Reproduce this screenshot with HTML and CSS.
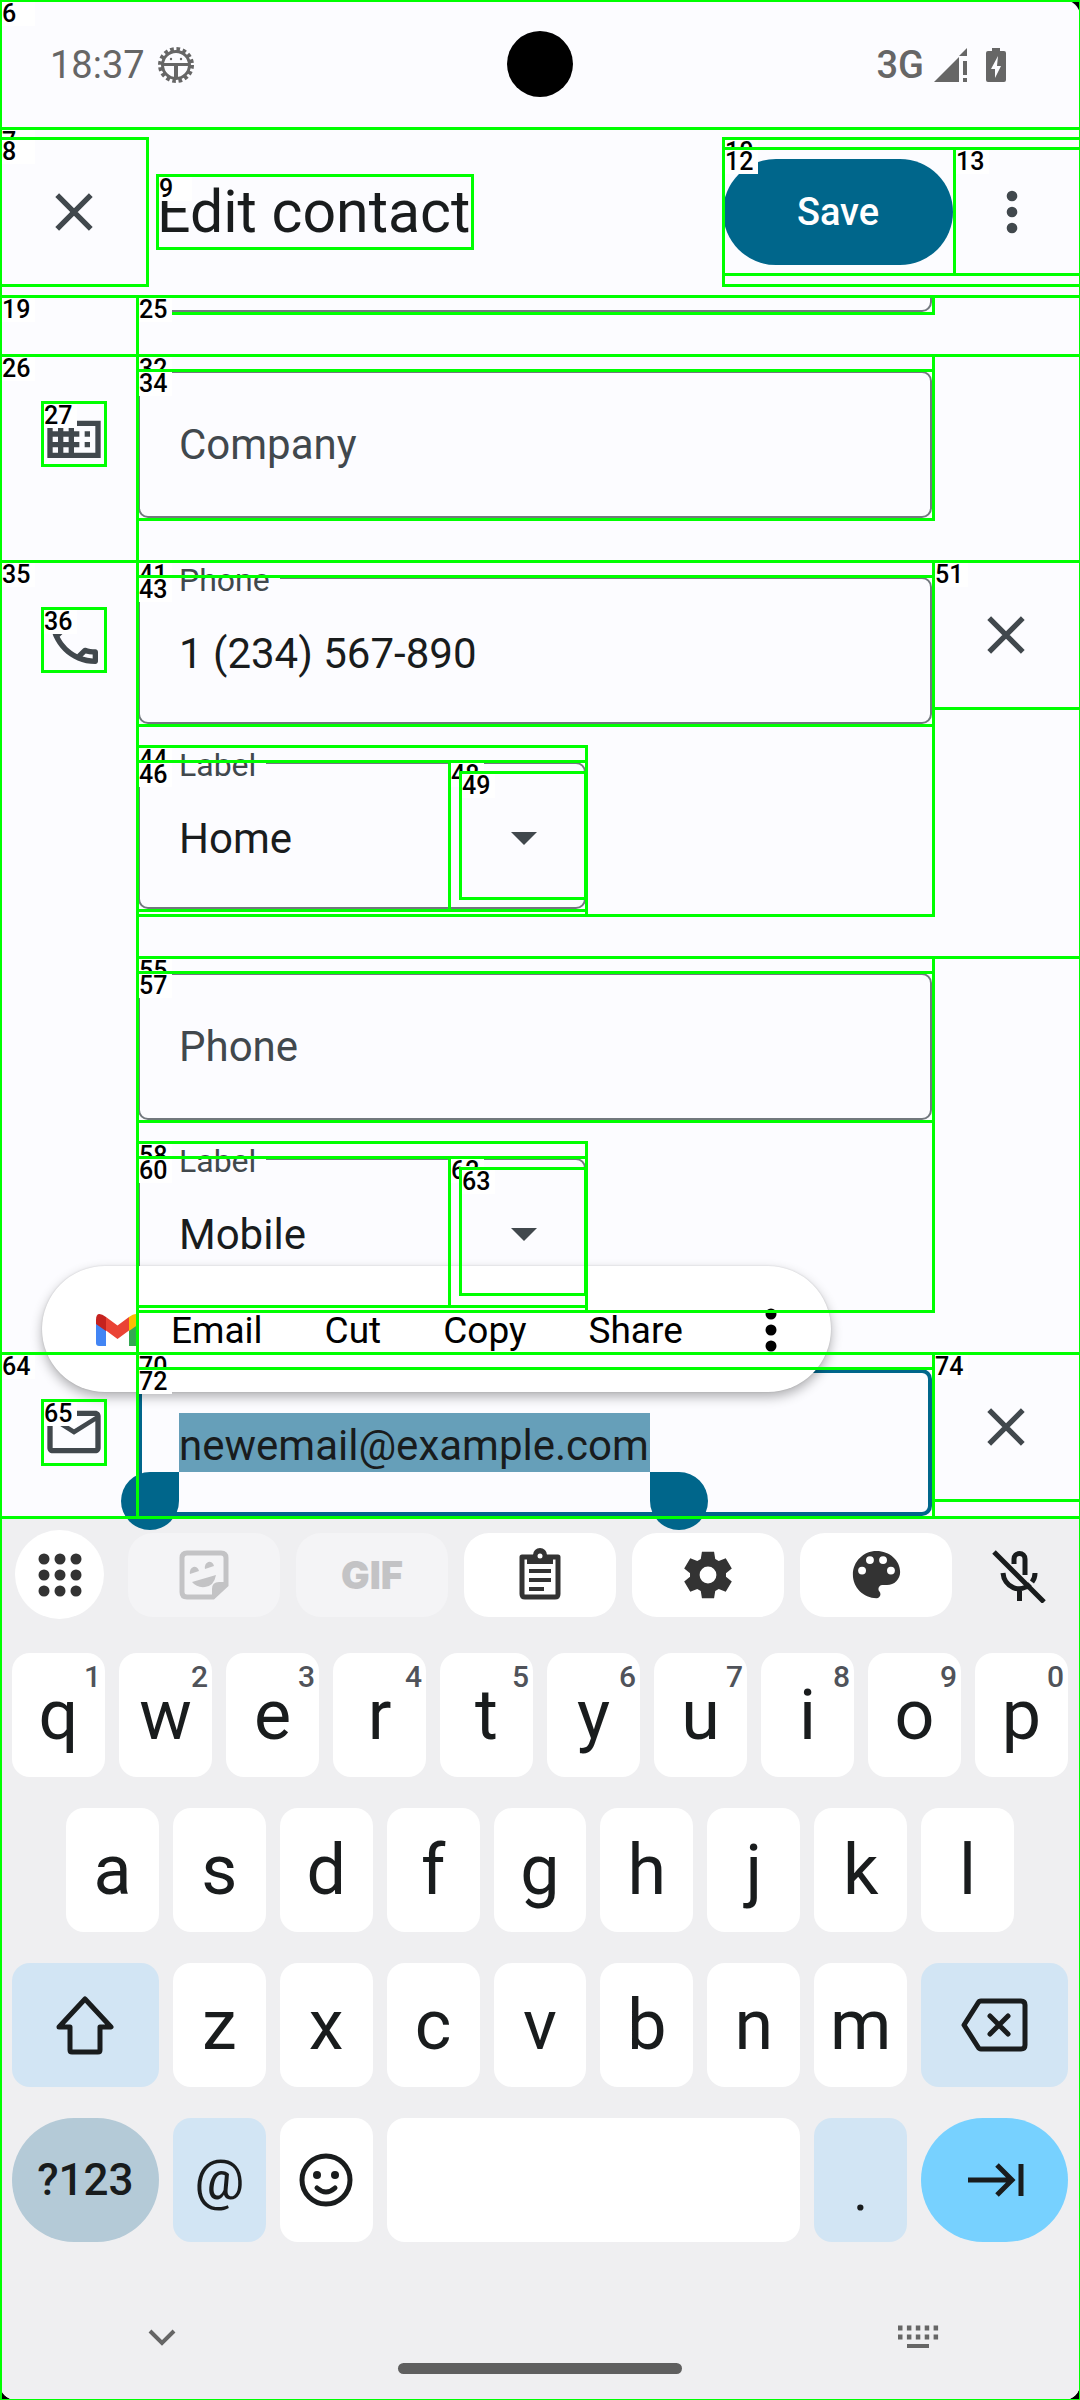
FILE: index.html
```html
<!DOCTYPE html>
<html lang="en">
<head>
<meta charset="utf-8">
<meta name="viewport" content="width=device-width, initial-scale=1">
<title>Edit contact</title>
<link rel="stylesheet" href="styles.css">
</head>
<body>
<div class="stage">
<div class="screen">
  <header class="status">
    <span class="clock">18:37</span>
    <svg class="status-bug" viewBox="0 0 38 38" aria-hidden="true">
      <circle cx="19" cy="19" r="16" fill="none" stroke="#666" stroke-width="4" stroke-dasharray="3.6 2.68"/>
      <circle cx="19" cy="19" r="13.5" fill="none" stroke="#666" stroke-width="3"/>
      <path d="M6 17h26v3H21v13h-4V20H6z" fill="#666"/>
      <circle cx="14" cy="13" r="1.2" fill="#666"/><circle cx="24" cy="13" r="1.2" fill="#666"/>
    </svg>
    <span class="camera"></span>
    <span class="network">3G</span>
    <svg class="status-signal" viewBox="0 0 34 34" aria-hidden="true">
      <path d="M0 34L25 9v25zM25 8l8-8v8zM29 13h4v14h-4zM29 30h4v4h-4z" fill="#666"/>
    </svg>
    <svg class="status-battery" viewBox="0 0 20 34" aria-hidden="true">
      <path d="M6 0h8v3h4q2 0 2 2v27q0 2-2 2H2q-2 0-2-2V5q0-2 2-2h4z" fill="#666"/>
      <path d="M12 8L5 21h4v9l6-12h-4z" fill="#fcfcff"/>
    </svg>
  </header>

  <div class="appbar">
    <button class="icon-btn bar-close" aria-label="Close"><svg class="ic" viewBox="0 0 24 24"><path d="M5.7 5.7l12.6 12.6M18.3 5.7L5.7 18.3" class="cross"/></svg></button>
    <h1 class="title">Edit contact</h1>
    <button class="save">Save</button>
    <button class="icon-btn bar-more" aria-label="More options"><svg class="ic" viewBox="0 0 24 24"><circle cx="12" cy="6" r="2"/><circle cx="12" cy="12" r="2"/><circle cx="12" cy="18" r="2"/></svg></button>
  </div>

  <main class="form">
    <div class="row row-tail"><div class="stack"><div class="field-tail"></div></div></div>

    <div class="row">
      <svg class="ic row-icon" viewBox="0 0 24 24" aria-hidden="true"><path d="M12 7V3H2v18h20V7H12zM6 19H4v-2h2v2zm0-4H4v-2h2v2zm0-4H4V9h2v2zm0-4H4V5h2v2zm4 12H8v-2h2v2zm0-4H8v-2h2v2zm0-4H8V9h2v2zm0-4H8V5h2v2zm10 12h-8v-2h2v-2h-2v-2h2v-2h-2V9h8v10zm-2-8h-2v2h2v-2zm0 4h-2v2h2v-2z"/></svg>
      <div class="stack stack-last"><div class="field"><input type="text" placeholder="Company" aria-label="Company"></div></div>
    </div>

    <div class="row">
      <svg class="ic row-icon" viewBox="0 0 24 24" aria-hidden="true"><path d="M6.54 5c.06.89.21 1.76.45 2.59l-1.2 1.2c-.41-1.2-.67-2.47-.76-3.79h1.51m9.86 12.02c.85.24 1.72.39 2.6.45v1.49c-1.32-.09-2.59-.35-3.8-.75l1.2-1.19M7.5 3H4c-.55 0-1 .45-1 1 0 9.39 7.61 17 17 17 .55 0 1-.45 1-1v-3.49c0-.55-.45-1-1-1-1.24 0-2.45-.2-3.57-.57-.1-.04-.21-.05-.31-.05-.26 0-.51.1-.71.29l-2.2 2.2c-2.83-1.45-5.15-3.76-6.59-6.59l2.2-2.2c.28-.28.36-.67.25-1.02C8.7 6.45 8.5 5.25 8.5 4c0-.55-.45-1-1-1z"/></svg>
      <div class="stack">
        <div class="field filled"><label for="phone1">Phone</label><input id="phone1" type="tel" value="1 (234) 567-890"></div>
        <div class="field filled short"><label for="label1">Label</label><select id="label1"><option>Home</option></select><svg class="arrow" viewBox="0 0 26 13" aria-hidden="true"><path d="M0 0h26L13 13z"/></svg></div>
      </div>
      <button class="icon-btn clear" aria-label="Delete phone"><svg class="ic" viewBox="0 0 24 24"><path d="M5.7 5.7l12.6 12.6M18.3 5.7L5.7 18.3" class="cross"/></svg></button>
    </div>

    <div class="row">
      <div class="stack">
        <div class="field"><input type="tel" placeholder="Phone" aria-label="Phone"></div>
        <div class="field filled short"><label for="label2">Label</label><select id="label2"><option>Mobile</option></select><svg class="arrow" viewBox="0 0 26 13" aria-hidden="true"><path d="M0 0h26L13 13z"/></svg></div>
      </div>
    </div>

    <div class="row row-email">
      <svg class="ic row-icon" viewBox="0 0 24 24" aria-hidden="true"><path d="M20 4H4c-1.1 0-1.99.9-1.99 2L2 18c0 1.1.9 2 2 2h16c1.1 0 2-.9 2-2V6c0-1.1-.9-2-2-2zm0 14H4V8l8 5 8-5v10zm-8-7L4 6h16l-8 5z"/></svg>
      <div class="stack stack-end">
        <div class="field active">
          <div class="selection">
            <input type="email" value="newemail@example.com" aria-label="Email">
            <span class="handle handle-start"></span><span class="handle handle-end"></span>
          </div>
        </div>
      </div>
      <button class="icon-btn clear" aria-label="Delete email"><svg class="ic" viewBox="0 0 24 24"><path d="M5.7 5.7l12.6 12.6M18.3 5.7L5.7 18.3" class="cross"/></svg></button>

      <div class="popup" role="toolbar" aria-label="Text actions">
        <button class="popup-main">
          <svg class="gmail" viewBox="0 0 43 32" aria-hidden="true">
            <path d="M0 8l10 7v17H3q-3 0-3-3z" fill="#4285f4"/>
            <path d="M43 8l-10 7v17h7q3 0 3-3z" fill="#34a853"/>
            <path d="M33 3q10-7 10 3v4l-10 7z" fill="#fbbc04"/>
            <path d="M10 3Q0-4 0 6v4l10 7z" fill="#c5221f"/>
            <path d="M10 3l11.500 8.500L33 3v13.500L21.500 25 10 16.500z" fill="#ea4335"/>
          </svg>Email</button>
        <button>Cut</button>
        <button>Copy</button>
        <button>Share</button>
        <button class="popup-more" aria-label="More"><svg viewBox="0 0 12 44"><circle cx="6" cy="6" r="5.500"/><circle cx="6" cy="22" r="5.500"/><circle cx="6" cy="38" r="5.500"/></svg></button>
      </div>
    </div>
  </main>

  <section class="keyboard" aria-label="Keyboard">
    <div class="strip">
      <button class="round" aria-label="Features"><svg viewBox="0 0 44 44"><g fill="#333"><circle cx="6" cy="6" r="5.500"/><circle cx="22" cy="6" r="5.500"/><circle cx="38" cy="6" r="5.500"/><circle cx="6" cy="22" r="5.500"/><circle cx="22" cy="22" r="5.500"/><circle cx="38" cy="22" r="5.500"/><circle cx="6" cy="38" r="5.500"/><circle cx="22" cy="38" r="5.500"/><circle cx="38" cy="38" r="5.500"/></g></svg></button>
      <button class="chip off" aria-label="Stickers"><svg viewBox="0 0 56 56"><path d="M11 6h34q5 0 5 5v27L37 50H11q-5 0-5-5V11q0-5 5-5z" fill="none" stroke="#c3c3c5" stroke-width="5"/><path d="M36 51V42q0-7 7-7h8zM14 27a4 5 0 0 1 9-3zM29 22a4 5 0 0 1 9-3zM16 35l24-7q-2 11-11 12-8 1-13-5z" fill="#c3c3c5"/></svg></button>
      <button class="chip off gif">GIF</button>
      <button class="chip" aria-label="Clipboard"><svg viewBox="0 0 56 56"><path d="M10 10h36v37q0 3-3 3H13q-3 0-3-3z" fill="none" stroke="#333" stroke-width="5" stroke-linejoin="round"/><path d="M15 8h6a7 7 0 0 1 14 0h6v9H15zM17 22h22v4H17zM17 31h22v4H17zM17 40h15v4H17z" fill="#333"/><circle cx="28" cy="9" r="2.500" fill="#fff"/></svg></button>
      <button class="chip" aria-label="Settings"><svg viewBox="0 0 24 24"><path fill="#333" fill-rule="evenodd" d="M9.400 2h5.200l.5 3.100 1.500.9 3-1.200 2.600 4.400-2.500 2v1.600l2.500 2-2.600 4.400-3-1.200-1.500.9-.5 3.100H9.400l-.5-3.100-1.500-.9-3 1.200-2.600-4.400 2.500-2v-1.600l-2.500-2 2.600-4.400 3 1.200 1.500-.9zM12 8.400a3.600 3.600 0 1 0 0 7.200 3.600 3.600 0 0 0 0-7.200z"/></svg></button>
      <button class="chip" aria-label="Themes"><svg class="big" viewBox="0 0 24 24"><path fill="#333" d="M12 3c-4.970 0-9 4.030-9 9s4.030 9 9 9c.83 0 1.500-.67 1.500-1.500 0-.39-.15-.74-.39-1.010-.23-.26-.38-.61-.38-.99 0-.83.67-1.500 1.500-1.500H16c2.760 0 5-2.240 5-5 0-4.420-4.030-8-9-8z"/><g fill="#fff"><circle cx="6.500" cy="10.500" r="1.500"/><circle cx="9.500" cy="6.500" r="1.500"/><circle cx="14.500" cy="6.500" r="1.500"/><circle cx="17.500" cy="10.500" r="1.500"/></g></svg></button>
      <button class="mic" aria-label="Voice input off"><svg viewBox="0 0 56 56"><g fill="none" stroke="#191c1d" stroke-width="5"><path d="M23 17v-5a5.500 5.500 0 0 1 11 0v16M12 26a16 17 0 0 0 27 11M44 26q0 5-3 9M28.500 42v12M3 5l50 50"/></g></svg></button>
    </div>

    <div class="keys">
      <div class="krow">
        <button class="key">q<sup>1</sup></button><button class="key">w<sup>2</sup></button><button class="key">e<sup>3</sup></button><button class="key">r<sup>4</sup></button><button class="key">t<sup>5</sup></button><button class="key">y<sup>6</sup></button><button class="key">u<sup>7</sup></button><button class="key">i<sup>8</sup></button><button class="key">o<sup>9</sup></button><button class="key">p<sup>0</sup></button>
      </div>
      <div class="krow inset">
        <button class="key">a</button><button class="key">s</button><button class="key">d</button><button class="key">f</button><button class="key">g</button><button class="key">h</button><button class="key">j</button><button class="key">k</button><button class="key">l</button>
      </div>
      <div class="krow">
        <button class="key wide tint" aria-label="Shift"><svg viewBox="0 0 68 68"><path d="M34 8L60 36H49v23q0 2-2 2H21q-2 0-2-2V36H8z" class="line"/></svg></button>
        <button class="key">z</button><button class="key">x</button><button class="key">c</button><button class="key">v</button><button class="key">b</button><button class="key">n</button><button class="key">m</button>
        <button class="key wide tint" aria-label="Backspace"><svg viewBox="0 0 68 68"><path d="M20 10h40q4 0 4 4v40q0 4-4 4H20q-2 0-3-2L3 34 17 12q1-2 3-2zM29 25l18 18M47 25L29 43" class="line"/></svg></button>
      </div>
      <div class="krow">
        <button class="key wide pill symbols">?123</button>
        <button class="key tint at">@</button>
        <button class="key" aria-label="Emoji"><svg viewBox="0 0 68 68"><circle cx="34" cy="34" r="24" class="line"/><circle cx="25" cy="29" r="4" fill="#191c1d"/><circle cx="43" cy="29" r="4" fill="#191c1d"/><path d="M25 42q9 8 18 0" class="line"/></svg></button>
        <button class="key space" aria-label="Space"></button>
        <button class="key tint dot">.</button>
        <button class="key wide pill next" aria-label="Next"><svg viewBox="0 0 68 68"><path d="M7 34h44M36 19l15 15-15 15" class="sharp"/><path d="M60 18v32" class="sharp"/></svg></button>
      </div>
    </div>

    <nav class="sysnav">
      <button aria-label="Hide keyboard"><svg viewBox="0 0 48 48"><path d="M12 18l12 12 12-12" fill="none" stroke="#666" stroke-width="4"/></svg></button>
      <button aria-label="Switch keyboard"><svg viewBox="0 0 48 48"><g stroke="#666" fill="none"><path d="M4 15h41M4 24h41" stroke-width="5" stroke-dasharray="4.500 4.400"/><path d="M13 33h22" stroke-width="4"/></g></svg></button>
    </nav>
    <div class="homebar"></div>
  </section>
</div>
<div class="marks" id="marks"></div>
</div>
<script src="marks.js"></script>
</body>
</html>
```

FILE: marks.js
```js
// Element bounds: [label, left, top, right, bottom], drawn in order.
const bounds = [
  ["", 0, 0, 1080, 2400],
  ["6", 0, 0, 1080, 128],
  ["7", 0, 128, 1080, 296],
  ["8", 0, 138, 147, 285],
  ["9", 157, 175, 472, 248],
  ["10", 723, 138, 1080, 285],
  ["12", 723, 148, 954, 274],
  ["13", 954, 148, 1080, 274],
  ["19", 0, 296, 1080, 355],
  ["", 137, 296, 1080, 355],
  ["25", 137, 296, 933, 313],
  ["26", 0, 355, 1080, 561],
  ["27", 42, 402, 105, 465],
  ["", 137, 355, 1080, 561],
  ["32", 137, 355, 933, 519],
  ["34", 137, 370, 933, 519],
  ["35", 0, 561, 1080, 1353],
  ["36", 42, 608, 105, 671],
  ["", 137, 561, 1080, 957],
  ["", 137, 561, 933, 915],
  ["41", 137, 561, 933, 725],
  ["43", 137, 576, 933, 725],
  ["44", 137, 746, 586, 915],
  ["46", 137, 761, 586, 910],
  ["48", 449, 761, 586, 910],
  ["49", 460, 772, 585, 898],
  ["51", 933, 561, 1080, 708],
  ["", 137, 957, 1080, 1353],
  ["", 137, 957, 933, 1311],
  ["55", 137, 957, 933, 1121],
  ["57", 137, 972, 933, 1121],
  ["58", 137, 1142, 586, 1311],
  ["60", 137, 1157, 586, 1306],
  ["62", 449, 1157, 586, 1306],
  ["63", 460, 1168, 585, 1294],
  ["64", 0, 1353, 1080, 1517],
  ["65", 42, 1400, 105, 1464],
  ["70", 137, 1353, 933, 1517],
  ["72", 137, 1368, 933, 1517],
  ["74", 933, 1353, 1080, 1500]
];
const layer = document.getElementById("marks");
for (const [label, left, top, right, bottom] of bounds) {
  const box = document.createElement("div");
  box.className = "mark";
  box.style.left = left - 1 + "px";
  box.style.top = top - 1 + "px";
  box.style.width = right - left + 3 + "px";
  box.style.height = bottom - top + 3 + "px";
  if (label) {
    const tag = document.createElement("span");
    tag.className = "tag";
    tag.textContent = label;
    box.append(tag);
  }
  layer.append(box);
}
```

FILE: styles.css
```css
* { box-sizing: border-box; }
body {
  margin: 0;
  background: #000;
  font-family: Roboto, "Liberation Sans", sans-serif;
  color: #191c1d;
}
button, input, select {
  font: inherit;
  color: inherit;
  margin: 0;
  padding: 0;
  border: 0;
  background: none;
}
button { display: flex; align-items: center; justify-content: center; }
svg { display: block; flex: none; }
.stage { position: relative; overflow: hidden; }
.screen { background: #fcfcff; border-radius: 16px; overflow: hidden; }

.status {
  position: relative;
  display: flex;
  align-items: center;
  height: 128px;
  padding: 2px 74px 0 50px;
  color: #666;
  font-size: 38px;
}
.status-bug { width: 38px; height: 38px; margin-left: 12px; }
.camera {
  position: absolute;
  left: 50%;
  top: 31px;
  width: 66px;
  height: 66px;
  margin-left: -33px;
  border-radius: 50%;
  background: #000;
}
.network { margin-left: auto; font-weight: 500; }
.status-signal { width: 34px; height: 34px; margin-left: 10px; }
.status-battery { width: 20px; height: 34px; margin-left: 18px; }

.appbar { display: flex; align-items: center; height: 168px; }
.ic { width: 64px; height: 64px; fill: #41484d; }
.cross { stroke: #41484d; stroke-width: 2; }
.icon-btn { flex: none; }
.bar-close { width: 147px; height: 147px; }
.title {
  margin: 0 auto 0 10px;
  font-size: 59px;
  line-height: 72px;
  font-weight: 400;
}
.save {
  width: 230px;
  height: 106px;
  border-radius: 53px;
  background: #00668b;
  color: #fff;
  font-size: 38px;
  font-weight: 500;
}
.bar-more { width: 127px; height: 126px; padding-right: 10px; }

.row {
  position: relative;
  display: grid;
  grid-template-columns: 138px 1fr 148px;
  align-items: start;
}
.row-icon { margin: 47px 0 0 42px; grid-column: 1; grid-row: 1; }
.stack {
  grid-column: 2;
  grid-row: 1;
  display: grid;
  gap: 38px;
  padding: 16px 0 48px;
}
.stack-last { padding-bottom: 43px; }
.stack-end { padding-bottom: 1px; }
.row-tail .stack { padding: 0 0 43px; }
.field-tail {
  height: 16px;
  border: 2px solid #72787e;
  border-top: 0;
  border-radius: 0 0 10px 10px;
}
.clear { grid-column: 3; grid-row: 1; height: 147px; }
.field {
  position: relative;
  display: grid;
  align-items: center;
  height: 147px;
  padding: 0 39px;
  border: 2px solid #72787e;
  border-radius: 10px;
  font-size: 42px;
}
.filled { padding-top: 6px; }
.short { width: 448px; }
.field label {
  position: absolute;
  left: 29px;
  top: -18px;
  padding: 0 10px;
  background: #fcfcff;
  color: #41484d;
  font-size: 32px;
  line-height: 38px;
}
.field input, .field select {
  grid-area: 1 / 1;
  width: 100%;
  height: 60px;
  outline: 0;
  appearance: none;
}
.field input::placeholder { color: #41484d; opacity: 1; }
.arrow {
  grid-area: 1 / 1;
  justify-self: end;
  width: 26px;
  height: 13px;
  margin-right: 8px;
  fill: #41484d;
  pointer-events: none;
}
.active { border: 4px solid #00668b; padding: 0 37px; }
.selection { position: relative; width: 471px; }
.field .selection input {
  display: block;
  height: 59px;
  padding-top: 6px;
  background: #669fb9;
}
.handle {
  position: absolute;
  z-index: 3;
  top: 100%;
  width: 58px;
  height: 58px;
  background: #00668b;
}
.handle-start { right: 100%; border-radius: 29px 0 29px 29px; }
.handle-end { left: 100%; border-radius: 0 29px 29px 29px; }

.popup {
  position: absolute;
  z-index: 2;
  left: 42px;
  top: -87px;
  display: flex;
  align-items: center;
  gap: 62px;
  height: 126px;
  padding: 2px 54px 0;
  border-radius: 63px;
  background: #fff;
  box-shadow: 0 5px 12px rgba(0, 0, 0, .3), 0 0 2px rgba(0, 0, 0, .15);
  color: #000;
  font-size: 37px;
}
.popup-main { gap: 32px; }
.gmail { width: 43px; height: 32px; }
.popup-more { margin-left: 20px; }
.popup-more svg { width: 12px; height: 44px; }

.keyboard { background: #efeff1; padding: 13px 0 26px; }
.strip { display: flex; align-items: center; gap: 16px; padding-left: 15px; }
.round {
  width: 89px;
  height: 89px;
  margin-right: 8px;
  border-radius: 50%;
  background: #fff;
}
.round svg { width: 44px; height: 44px; }
.chip { flex: 1; height: 84px; border-radius: 25px; background: #fff; }
.chip svg, .mic svg { width: 56px; height: 56px; }
.chip .big { width: 63px; height: 63px; }
.chip.off { background: #f4f4f6; }
.gif { color: #c3c3c5; font-family: Inter, sans-serif; font-size: 38px; font-weight: 900; }
.mic { width: 112px; padding-right: 10px; }

.keys { display: grid; gap: 31px; padding: 34px 12px 0; }
.krow { display: flex; gap: 14px; }
.inset { padding: 0 54px; }
.key {
  position: relative;
  flex: 93 1 0;
  min-width: 0;
  height: 124px;
  border-radius: 18px;
  background: #fff;
  font-size: 70px;
  line-height: 82px;
}
.key sup {
  position: absolute;
  top: 6px;
  right: 4px;
  color: #50535a;
  font-size: 30px;
  font-weight: 500;
  line-height: 36px;
}
.key svg { width: 68px; height: 68px; }
.line { fill: none; stroke: #191c1d; stroke-width: 5; stroke-linejoin: round; stroke-linecap: round; }
.sharp { fill: none; stroke: #191c1d; stroke-width: 5; }
.wide { flex-grow: 147; }
.space { flex-grow: 414; }
.tint { background: #d2e5f4; }
.pill { border-radius: 62px; }
.symbols { background: #b4cad7; font-size: 44px; font-weight: 500; }
.next { background: #77d1ff; }
.at { font-size: 56px; }
.dot { padding-top: 22px; font-size: 56px; }

.sysnav { display: flex; justify-content: space-between; padding: 71px 138px 0; }
.sysnav svg { width: 48px; height: 48px; }
.homebar { width: 284px; height: 11px; margin: 2px auto 0; border-radius: 6px; background: #5f5f5f; }

.marks { position: absolute; inset: 0; z-index: 10; overflow: hidden; pointer-events: none; }
.mark { position: absolute; border: 3px solid #0f0; }
.tag {
  display: block;
  width: 33px;
  height: 24px;
  background: #fff;
  color: #000;
  font-size: 25px;
  font-weight: 500;
  line-height: 24px;
}
```
